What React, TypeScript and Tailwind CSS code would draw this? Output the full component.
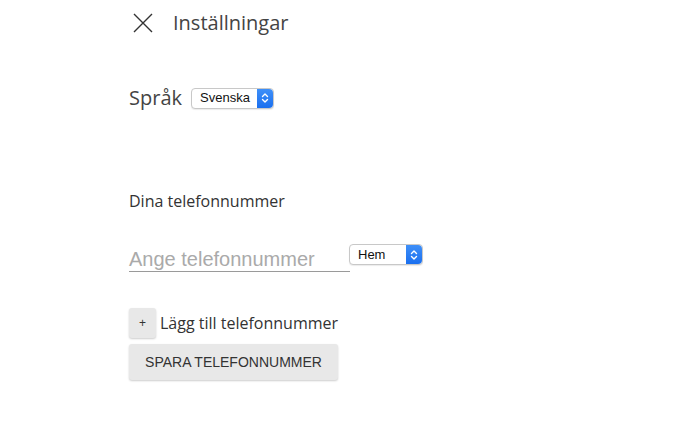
import React from "react";

function Stepper() {
  return (
    <span className="flex h-full w-[16px] items-center justify-center rounded-r-[4px] bg-gradient-to-b from-[#3e8ff8] to-[#1a6fef]">
      <svg width="8" height="12" viewBox="0 0 8 12" fill="none" stroke="white" strokeWidth="1.4" strokeLinecap="round" strokeLinejoin="round">
        <path d="M1.5 4.5 L4 2 L6.5 4.5" />
        <path d="M1.5 7.5 L4 10 L6.5 7.5" />
      </svg>
    </span>
  );
}

function MacSelect({ label, width }: { label: string; width: string }) {
  return (
    <div className={`flex h-[21px] ${width} items-stretch rounded-[4px] border border-[#c8c8c8] bg-white shadow-[0_1px_1px_rgba(0,0,0,0.08)]`}>
      <span className="flex flex-1 items-center pl-[8px] text-[13px] text-[#111] [font-family:'Liberation_Sans',Arial,sans-serif]">{label}</span>
      <Stepper />
    </div>
  );
}

export default function App() {
  return (
    <div className="min-h-[445px] w-[695px] bg-white [font-family:'Open_Sans',sans-serif]">
      <div className="flex items-center pl-[133px] pt-[13px]">
        <svg width="20" height="20" viewBox="0 0 20 20" stroke="#333" strokeWidth="1.4" fill="none">
          <path d="M1 1 L19 19 M19 1 L1 19" />
        </svg>
        <span className="ml-[20px] text-[20px] leading-[20px] text-[#444]">Inställningar</span>
      </div>

      <div className="mt-[53px] flex items-center pl-[129px]">
        <span className="text-[20px] leading-[24px] text-[#444]">Språk</span>
        <div className="ml-[9px]">
          <MacSelect label="Svenska" width="w-[83px]" />
        </div>
      </div>

      <div className="mt-[81px] pl-[129px] text-[16px] leading-[20px] text-[#333]">Dina telefonnummer</div>

      <div className="mt-[32px] flex items-start pl-[129px]">
        <div className="mt-[5px] w-[221px] border-b border-[#9a9a9a] pb-[1px] text-[20px] leading-[22px] text-[#aaa] [font-family:'Liberation_Sans',Arial,sans-serif]">
          Ange telefonnummer
        </div>
        <div className="-ml-[1px] mt-[1px]">
          <MacSelect label="Hem" width="w-[74px]" />
        </div>
      </div>

      <div className="mt-[36px] flex items-center pl-[129px]">
        <div className="flex h-[30px] w-[27px] items-center justify-center rounded-[3px] bg-[#e8e8e8] text-[12px] text-[#333] shadow-[0_1px_2px_rgba(0,0,0,0.2)] [font-family:'Liberation_Sans',Arial,sans-serif]">
          +
        </div>
        <span className="ml-[4px] text-[16px] text-[#333]">Lägg till telefonnummer</span>
      </div>

      <div className="mt-[6px] pl-[129px]">
        <div className="flex h-[36px] w-[209px] items-center justify-center rounded-[3px] bg-[#e8e8e8] text-[14px] text-[#333] shadow-[0_1px_2px_rgba(0,0,0,0.2)] [font-family:'Liberation_Sans',Arial,sans-serif]">
          SPARA TELEFONNUMMER
        </div>
      </div>
    </div>
  );
}
